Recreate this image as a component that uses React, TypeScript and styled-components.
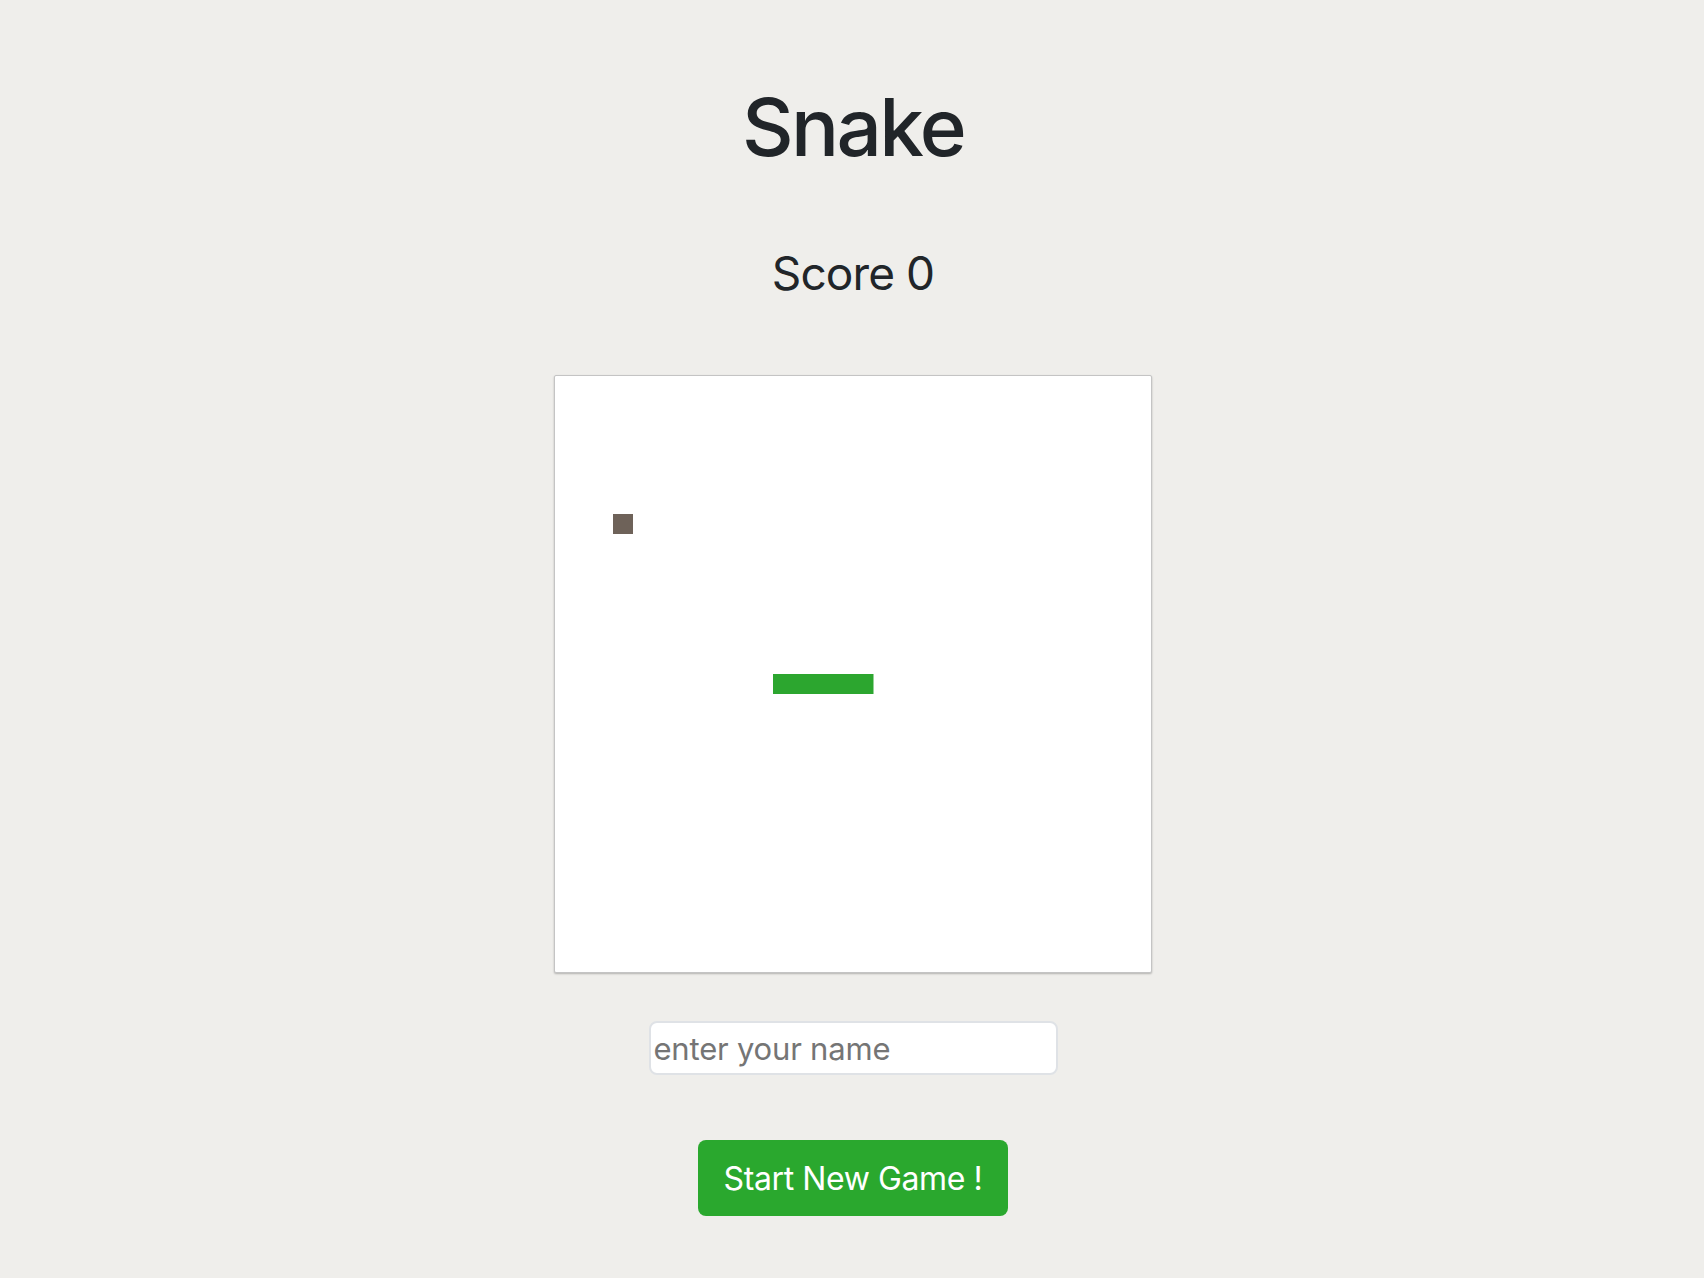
import React from "react";
import styled, { createGlobalStyle } from "styled-components";

const GlobalStyle = createGlobalStyle`
  html, body { margin: 0; padding: 0; background: #efeeeb; }
  body { font-family: Inter, "Liberation Sans", Arial, sans-serif; color: #212529; }
`;

const Page = styled.main`
  display: flex;
  flex-direction: column;
  align-items: center;
  padding-top: 79px;
  padding-left: 2px;
  min-height: 1278px;
  box-sizing: border-box;
`;

const Title = styled.h1`
  margin: 0;
  font-size: 80px;
  line-height: 96px;
  font-weight: 500;
  letter-spacing: -2.6px;
`;

const Score = styled.h2`
  margin: 69px 0 0;
  font-size: 46px;
  line-height: 58px;
  font-weight: 400;
  letter-spacing: -0.9px;
`;

const Board = styled.div`
  margin-top: 73px;
  width: 598px;
  height: 598px;
  box-sizing: border-box;
  background: #ffffff;
  border: 1px solid #c4c4c4;
  border-radius: 2px;
  box-shadow: 0 1px 2px rgba(0, 0, 0, 0.25);
  display: flex;
`;

const NameInput = styled.input`
  margin-top: 48px;
  width: 409px;
  height: 54px;
  box-sizing: border-box;
  border: 2px solid #dfe2e6;
  border-radius: 8px;
  background: #ffffff;
  padding: 0 3px;
  font-family: inherit;
  font-size: 31px;
  letter-spacing: -0.2px;
  color: #212529;
  &::placeholder { color: #757575; }
  outline: none;
`;

const StartButton = styled.button`
  margin-top: 65px;
  width: 310px;
  height: 76px;
  border: none;
  border-radius: 8px;
  background: #2aa82e;
  color: #ffffff;
  font-family: inherit;
  font-size: 32px;
  font-weight: 400;
  letter-spacing: -0.4px;
  cursor: pointer;
`;

const snake = [
  { x: 11, y: 15 },
  { x: 12, y: 15 },
  { x: 13, y: 15 },
  { x: 14, y: 15 },
  { x: 15, y: 15 },
];
const food = { x: 3, y: 7 };

export default function App() {
  return (
    <>
      <GlobalStyle />
      <Page>
        <Title>Snake</Title>
        <Score>Score 0</Score>
        <Board>
          <svg width="596" height="596" viewBox="2 2 596 596">
            <rect x={food.x * 20} y={food.y * 20} width="20" height="20" fill="#6e6259" />
            {snake.map((s, i) => (
              <rect key={i} x={s.x * 20} y={s.y * 20} width="20.5" height="20" fill="#2ca62f" />
            ))}
          </svg>
        </Board>
        <NameInput placeholder="enter your name" />
        <StartButton>Start New Game !</StartButton>
      </Page>
    </>
  );
}
